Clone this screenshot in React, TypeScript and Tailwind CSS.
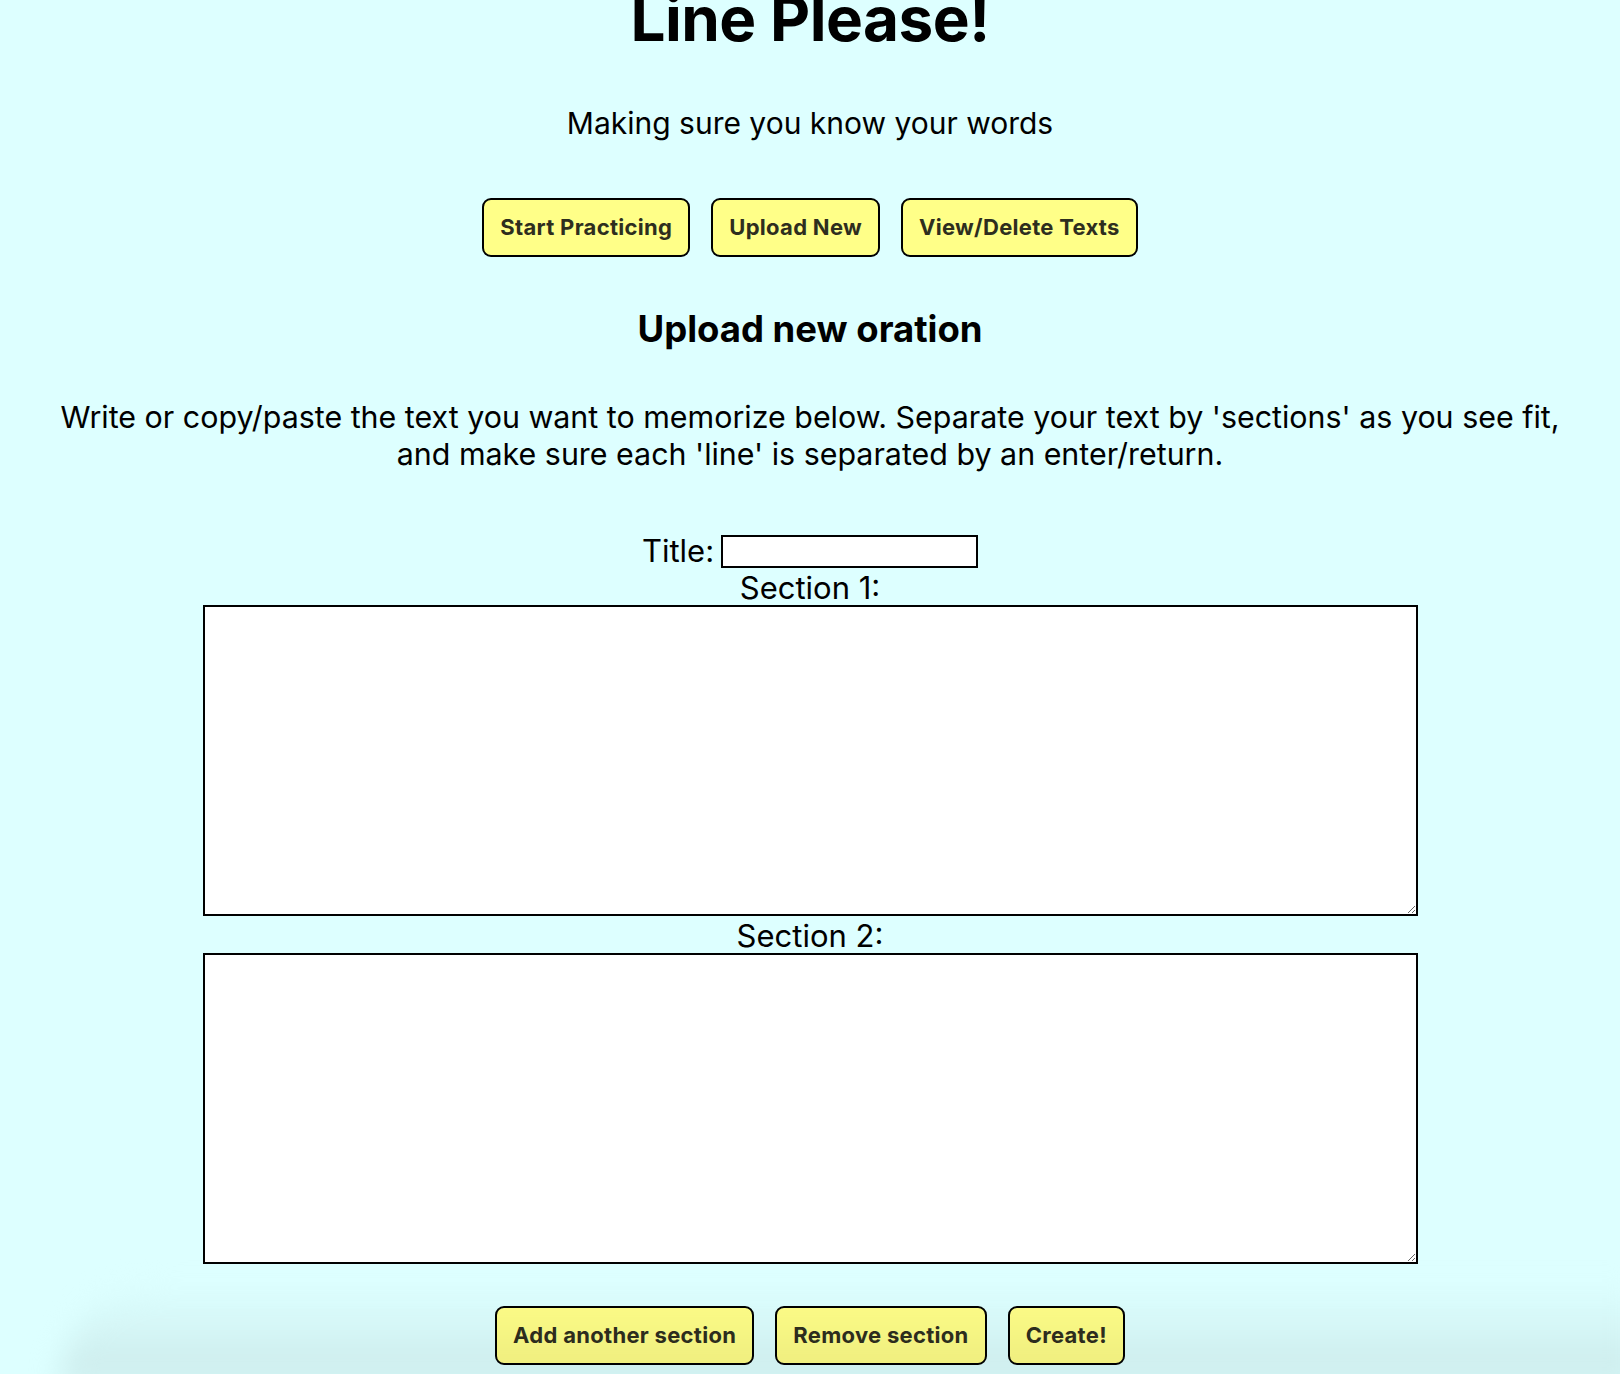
const navButtons = ["Start Practicing", "Upload New", "View/Delete Texts"];
const formButtons = ["Add another section", "Remove section", "Create!"];

const YellowButton = ({ label }: { label: string }) => (
  <button className="h-[59px] px-[16px] rounded-[9px] border-2 border-black bg-[#ffff88] text-[22px] font-bold text-[#2e2e1e] tracking-[0.3px]">
    {label}
  </button>
);

const App = () => {
  return (
    <div className="min-h-screen bg-[#ddffff] text-black font-['Inter','Noto_Sans',sans-serif] overflow-hidden">
      <div className="flex flex-col items-center text-center">
        {/* ----heading---- */}
        <h1 className="-mt-[11px] text-[62px] leading-[60px] font-bold tracking-[-0.5px]">
          Line Please!
        </h1>
        <p className="mt-[57px] text-[30px] leading-[34px]">
          Making sure you know your words
        </p>

        {/* ----nav---- */}
        <div className="mt-[58px] flex gap-[21px]">
          {navButtons.map((b) => (
            <YellowButton key={b} label={b} />
          ))}
        </div>

        {/* ----upload form---- */}
        <h2 className="mt-[52px] text-[36.5px] leading-[40px] font-bold">
          Upload new oration
        </h2>
        <p className="mt-[50px] text-[30.4px] leading-[37px] px-[30px]">
          Write or copy/paste the text you want to memorize below. Separate your text by 'sections' as you see fit,
          <br />
          and make sure each 'line' is separated by an enter/return.
        </p>

        <div className="mt-[61px] flex items-center gap-[7px] h-[34px]">
          <span className="text-[31px] leading-[34px]">Title:</span>
          <input
            type="text"
            className="w-[257px] h-[33px] border-2 border-black bg-white outline-none"
          />
        </div>

        <span className="mt-[3px] text-[31px] leading-[34px]">Section 1:</span>
        <textarea className="w-3/4 h-[311px] border-2 border-black bg-white outline-none block" />
        <span className="mt-[3px] text-[31px] leading-[34px]">Section 2:</span>
        <textarea className="w-3/4 h-[311px] border-2 border-black bg-white outline-none block" />

        <div className="mt-[42px] flex gap-[21px] pb-[40px]">
          {formButtons.map((b) => (
            <YellowButton key={b} label={b} />
          ))}
        </div>
      </div>

      {/* ----bottom shade---- */}
      <div className="pointer-events-none fixed -bottom-[10px] left-[60px] -right-[20px] h-[100px] rounded-tl-[260px] bg-gradient-to-b from-[#ffffff] to-[#ebeaea] mix-blend-multiply blur-[14px]"></div>
    </div>
  );
};

export default App;
